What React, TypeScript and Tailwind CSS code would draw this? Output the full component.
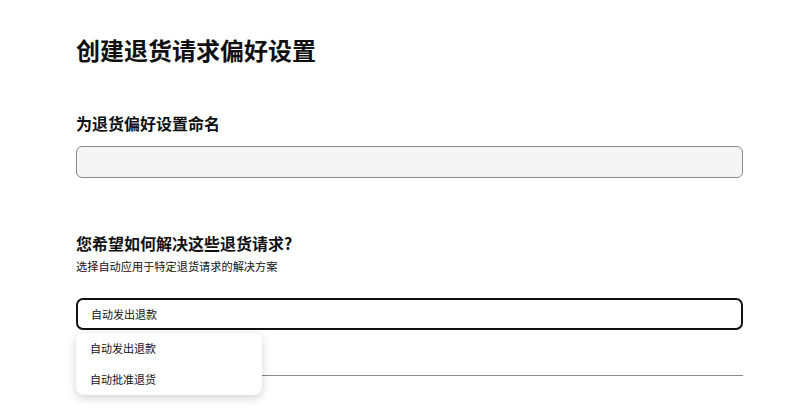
const FONT = "font-['Noto_Sans_CJK_SC','Noto_Sans',sans-serif]";

const options = ["自动发出退款", "自动批准退货"];

export default function App() {
  return (
    <div className={`${FONT} min-h-screen bg-white text-[#111] px-[76px] pt-[35px]`}>
      <div className="w-[667px]">
        <h1 className="text-[24px] leading-[30px] font-bold">创建退货请求偏好设置</h1>

        {/* 名称 */}
        <label className="block mt-[47px] text-[16px] leading-[22px] font-bold">为退货偏好设置命名</label>
        <input
          type="text"
          className="mt-3 block w-full h-8 rounded-md border border-[#8a8a8a] bg-[#f5f5f5] px-3 text-[12px] outline-none"
        />

        {/* 解决方案 */}
        <h2 className="mt-[54px] text-[16px] leading-[22px] font-bold">您希望如何解决这些退货请求?</h2>
        <p className="mt-1 text-[11.2px] leading-4">选择自动应用于特定退货请求的解决方案</p>

        <div className="relative mt-6">
          <div className="flex items-center h-8 rounded-[7px] border-2 border-[#111] pl-[13px] text-[11px]">
            自动发出退款
          </div>

          <div className="mt-[45px] border-t border-[#8a8a8a]" />

          <ul className="absolute left-0 top-[35px] w-[186px] rounded-lg bg-white shadow-[0_3px_10px_rgba(0,0,0,0.18)]">
            {options.map((o) => (
              <li key={o} className="flex items-center h-[31px] pl-[14px] text-[11px]">
                {o}
              </li>
            ))}
          </ul>
        </div>
      </div>
    </div>
  );
}
